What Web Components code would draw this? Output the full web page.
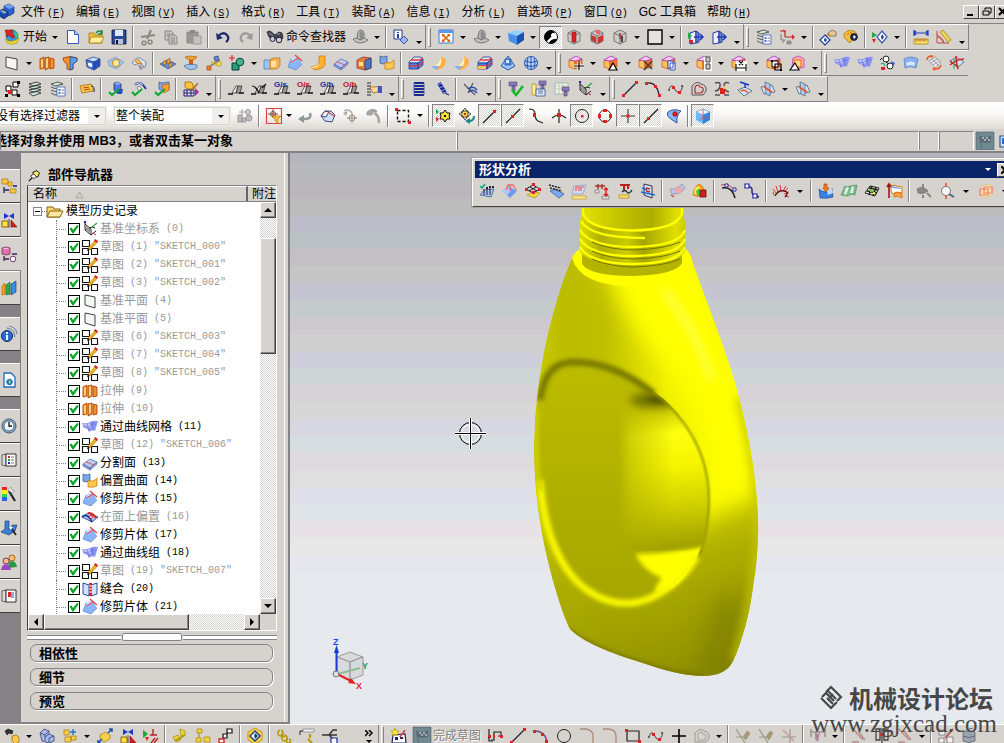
<!DOCTYPE html>
<html lang="zh-CN">
<head>
<meta charset="utf-8">
<title>部件导航器</title>
<style>
html,body{margin:0;height:100%;overflow:hidden;background:#d6d3ce;color:#000;font:12px/16px "Liberation Sans","Noto Sans CJK SC",sans-serif}
</style>
</head>
<body>
<cad-app></cad-app>
<script>
/* Icon parts: "fill,stroke,width|path" ; "o|cx,cy,r,fill,stroke" ; "t|x,y,size,colour,text" ; "@name" includes another icon */
const ICONS={
app:'o|8,7,6,#3a8fe0,#1a5;#e8d23a,#a80,.5|M1 10Q7 15 15 9L13 14Q8 17 3 14z;#d22,#811,.5|M1 1L9 1L8 4L11 8L8 9L5 6L3 8z;#5c5,-|M10 3L14 6L12 9z',
nx:'#2a5fd0,#124,.6|M5 2L10 0L15 3V9L10 12L5 9z;#6aa4f4,-|M5 2L10 0L15 3L10 5z;#1a48b0,#124,.6|M0 7L4 5L9 8V12L5 15L0 12z;#7ab,-|M1 7L4 6L8 8L5 10z',
new:'#fff,#3558b8,1|M2.500 1.500h7l4 4v9h-11z;#b9cdf5,#3558b8,1|M9.500 1.500v4h4',
open:'#f0c040,#a87810,.8|M1 4h5l1 2h7v8H1z;#fff0a0,#a87810,.8|M3 8h13l-3 6H1z;-,#284,1.500|M8 4Q11 0 14 4M14 1v4h-4',
save:'#2a4a9a,#113,.8|M1 1h14v14H1z;#dfe8fa,-|M4 1h8v6H4z;#b8c4d8,-|M4 10h8v5H4z;#113,-|M5 11h2v4H5z',
cut:'-,#8a8884,2|M11 1L7 10M1 8L15 6;-,#8a8884,1.600|M4 12a2 2 0 1 0 .1 0M10 11a2 2 0 1 0 .1 0',
copy:'#c6c3be,#888,1|M2 2h6l2 2v7H2z;#c6c3be,#888,1|M6 6h6l2 2v7H6z;-,#888,1|M8 9h4M8 11h4M8 13h4M4 5h3M4 7h2',
paste:'#9a9690,#888,1|M1 3h11v11H1z;#888,-|M4 1h5v3H4z;#c6c3be,#999,1|M7 7h8v8H7z',
undo:'-,#1a2a6a,2.200|M3 7Q8 2 12 6Q15 10 11 13;#1a2a6a,-|M1 4L2 11L8 9z',
redo:'-,#999,2.200|M13 7Q8 2 4 6Q1 10 5 13;#999,-|M15 4L14 11L8 9z',
bino:'#445,#223,.8|M0 3L3 2L8 6L12 3L15 4L16 9L12 12L8 9L6 11L2 8z;o|5.500,10,2.500,#ccd,#223;o|12,11,2.800,#ccd,#223;-,#99a,1|M2 4L6 7M10 5L13 5',
shoe:'#b4b4b4,#666,.8|M5 10Q5 1 9 1Q13 2 12 9L8 11z;#8c8c8c,-|M8 10Q7 3 9 2Q12 3 11 9z;#c2c2c2,#666,.8|M1 10L5 9L8 11L12 9L16 11Q13 14 8 14Q3 14 1 10z',
info:'#fff,#223a9a,1|M1 1h8v9H1z;#223a9a,-|M4 3h2v1H4zM4 5h2v4H4z;#9ab8f0,#223a9a,.8|M11 7L15 11L11 15L7 11z;-,#889,1|M9 6L12 9',
fit:'#fff,#3a78d0,1|M1 1h14v13H1z;#5a98f0,-|M1 1h14v3H1z;-,#e06010,1.600|M5 6L11 12M11 6L5 12;#e06010,-|M4 5h3L4 8zM12 5v3L9 5zM4 13v-3l3 3zM12 13H9l3-3z',
cubeb:'#8fd0ff,-|M0 4L8 1L16 3L9 7z;#4a90e8,-|M0 4L9 7V16L1 12z;#1a50b0,-|M16 3V11L9 16V7z',
shade:'o|8,8,6.500,#fff,#000;#000,-|M8 1.500a6.500 6.500 0 0 0 -4.500 11L8 8Q9 5 12 3.500A6.500 6.500 0 0 0 8 1.500z;#000,-|M14 10A6.500 6.500 0 0 1 6 14.200Q8 10 12 10z;o|10,6,1.500,#fff,#fff',
wire:'#ccc,#777,1|M8 1L14 4V12L8 15L2 12V4z;-,#777,1|M2 4L8 7L14 4M8 7V15',
cr1:'@wire;#d22,#911,.6|M6 3h4v10H6z',
cr2:'@wire;#c33,-|M2 6l5 2v6L2 11zM9 8l5-2v6l-5 3z;#e66,-|M7 1h4v4H7z',
cr3:'@wire;#b44,-|M7 4h2v6H7z;#444,-|M9 7h2v6H9z',
sq:'#e4e2de,#000,1.400|M1 1h14v14H1z',
door:'#eef,#223a9a,1|M2 4L8 2V14L2 15z;#6a86c8,#223a9a,1|M8 2L11 4V13L8 14z;-,#1a3ac0,1.500|M6 8h8M12 5l3 3l-3 3',
doorg:'@door;#2a4,-|M0 3l4 4l-4 3z;#d22,-|M1 11h4v3H1z',
lay:'#cde6dc,#222,.8|M2 3L10 1L14 3L6 5zM2 6L10 4.500L14 6L6 8zM2 9L10 7.500L14 9L6 11zM2 12L10 10.500L14 12L6 15z',
layl:'#d6ecdf,#333,.8|M1 3L8 1L13 3L5 5zM1 6L5 7.500L8 7M1 9L5 10.500L8 10M1 12L5 14L8 13;#fff,#3a58b8,.8|M7 6h8v9H7z;#3a78e0,-|M8.500 8h2v2h-2zM8.500 11h2v2h-2z;-,#555,.8|M11.500 9h2.500M11.500 12h2.500',
wcs:'-,#c22,1.200|M6 8L6 2M6 8h9M1 2h6M13 6l2 2l-2 2M4 1l2 2;-,#777,1|M2 5v6h4l-3 3;#999,#777,.6|M8 12h4v3H8z',
hand:'#e8c898,#765,.8|M8 4L12 1L16 3V7L10 7z;-,#c82,2|M7 5L10 7;#fff,#1a3a9a,1.200|M5 6L10 11L5 16L0 11z;#1a3a9a,-|M5 8.500L7 11L5 13.500L4 11z',
pal:'#f0c040,#a70,.8|M1 5Q4 0 11 2Q16 5 12 10Q8 9 8 13Q6 15 4 11Q0 9 1 5z;o|11,8,3.400,#224,#224;#f80,-|M4 4h2v2H4zM7 3h2v2H7z;#fff,-|M11 6l2 2l-2 2l-1-2z',
play:'#2a4,-|M0 3l5 3l-5 3z;#d22,-|M0 10h4l-2 4z;#fff,#3a58b8,1.200|M10 2L15 8L10 14L5 8z;#1a3a9a,-|M10 5L12 8L10 11L9 8z',
ruler:'-,#1a3ac0,1.200|M1 4h14M3 2L1 4l2 2M13 2l2 2l-2 2M1 1v6M15 1v6;#ffe070,#a80,.8|M1 10h14v5H1z;-,#a40,.8|M3 10v3M5 10v2M7 10v3M9 10v2M11 10v3M13 10v2',
ang:'#f0d060,#a80,.8|M4 3L7 1L15 11L12 13z;-,#c44,1|M1 2V14H13M1 8Q7 8 8 14M1 5L8 14',
plane:'#f6f6f6,#444,1|M2 2L13 4V15L2 12z',
extr:'#f8902a,#a03a00,.8|M1 4L5 2V13L1 14zM6 3L10 2V13L6 15zM11 3L15 4V13L11 14z;#ffd080,-|M2 5L4 4V12L2 13zM7 4L9 3V12L7 13z',
rev:'#f8902a,#a03a00,.8|M1 3Q8 0 15 3V6Q12 8 11 9V14L8 15L5 14V9Q1 7 1 3z;#5a9af0,#235,.6|M8 2V15L11 14V9Q13 8 15 6V3Q12 2 8 2z',
blk:'#c8dcff,#1a3a8a,.7|M1 5L8 2L15 4L9 7z;#4a78e0,#1a3a8a,.7|M1 5L9 7V15L2 12z;#2a50b8,#1a3a8a,.7|M15 4V11L9 15V7z;#fff,-|M3 8Q5 7 7 9V12Q4 12 3 10z',
hole:'#9cc4f4,#78a,.6|M0 6L7 2L16 7L9 14L1 11z;o|8,8,3.600,#ffe6a8,#c80',
bl2:'#d8e6f8,#678,.8|M1 8Q4 2 9 3L15 7Q15 12 13 13Q12 8 8 8L4 10z;#f8c060,#b60,.7|M4 6Q6 4 8 5L11 9Q9 8 7 9z;#99a,-|M7 10Q11 9 12 14L9 15z',
emb:'#5a90e0,#246,.6|M0 9L8 5L16 9L8 14z;#f8a030,#a40,.6|M3 7l3-2v4l-3 1zM7 5l3-2v5l-3 1zM9 9l3-2v4l-3 2z',
stamp:'#f8a030,#a50,.6|M2 2Q8 0 14 2Q12 5 8 5Q4 5 2 2z;#d06010,-|M6 5h4v5H6z;#9cc4f4,#356,.6|M1 11Q5 8 14 10Q15 13 12 14Q5 16 1 11z',
inst:'#5a90e0,#224,.6|M8 2l4-1l1 4l-4 1z;#f08020,#a30,.6|M1 11h4v4H1z;#ffe040,#a80,.6|M11 7h4v4h-4zM6 7h3v3H6z;-,#667,1|M4 11L14 5',
bool:'#2a9a7a,#043,1|M3 8h7v7H3z;o|11,7,3.800,#4ab090,#043;-,#d22,1.200|M0 3h6M3 0v6',
pad:'#9cc4f4,#468,.6|M0 5h6l3-2v9l-3 2H0z;#f8b050,#a60,.6|M6 5L9 3h7v8l-3 3H6z;#ffe0a0,-|M7 6h5v6H7z',
trim:'#8ab4f8,-|M4 4L10 1L15 9L9 15L1 12z;#c8dcff,-|M4 4L10 1L11 4L6 8z;-,#d44,1.200|M5 7L11 3M8 0L15 6;-,#5a80c8,.7|M4 4L1 12L9 15L15 9',
sheet:'#ffb030,#c60,.6|M9 1h6v9Q13 14 5 15L1 12Q8 11 9 7z;#ffe9a0,-|M9 8Q10 12 3 13L1 12Q8 11 9 8z',
split:'#b8ccf4,#56a,.7|M1 9L8 4L15 7L8 13z;#8aa4e0,#56a,.7|M1 9v2l7 4v-2zM8 13l7-6v2l-7 6z;-,#e55,1|M4 7l8 3',
shell:'#e88030,#823,.7|M1 5L7 2L15 3V13L9 15L1 13z;#4a78c8,#235,.7|M9 5L15 3V13L9 15z;#ffe0a0,-|M3 7h4v4H3z',
off:'#7aa8f0,#357,.7|M1 1Q4 3 8 1V8Q4 10 1 8z;#ffc850,#b70,.7|M6 7Q10 10 15 5V13Q11 15 6 14z',
edge:'#ddeaff,#1a3a8a,.8|M1 7L6 2H13L15 4L10 8H1z;#4a80e8,#1a3a8a,.8|M1 8H10V14H1zM10 8L15 4V10L10 14z;-,#e33,1.300|M3 5L11 5L15 3M2 11h8l5-4',
chm:'@edge;#f8c850,-|M1 11h8v3H1z',
flow:'#ffb040,-|M10 1Q10 8 2 12L6 15Q15 13 15 5z;#fff3c0,-|M10 1Q10 8 2 12L6 13Q12 10 10 1z;#8ab0f0,-|M0 11h9l-4 4z',
cage:'#a0c4ff,#2a58b0,1|M8 1L15 11L8 15L1 11z;#4a80e8,#2a58b0,.8|M5 4h6v6H5z;#d8e8ff,-|M6 5h3v3H6z',
ball:'o|8,8,6.500,#b8d8ff,#2a50a8;-,#2a50a8,1|M8 1.500V14.500M2 6Q8 9 14 6M2 10Q8 13 14 10M5 3Q3 8 5 13M11 3Q13 8 11 13',
syn:'#ffc060,#c50,.7|M1 5L7 6V14L1 12z;#ff7030,#c50,.7|M7 6L14 4V12L7 14z;#f4ccf8,#a3a,.8|M1 5L8 1L14 4L7 6z',
sy1:'@syn;-,#fff,3|M11 6V15M6 11H16;-,#000,1.200|M11 6V15M6 11H16',
sy2:'@syn;#fff,#000,1.200|M10 8L14 15H6z',
sy3:'@syn;-,#444,1.700|M6 6L14 14M14 6L6 15',
sy4:'@syn;#fff,#3a58b8,1|M7 6h5v7H7zM9 8h5v7H9z',
sy5:'@syn;#fff,-|M8 2h8v14H8z;#ccc,#444,1|M10 2h4v5h-4zM10 9h4v5h-4z',
sy6:'@syn;#fff,-|M5 6h11v10H5z;-,#000,1.100|M5 9v7M15 9v7M5 13h10M8 6l4 4M12 6l-4 4',
sy7:'@syn;#fff,#000,1|M6 6h6v6H6z;-,#000,1.200|M9 9h6v6H9z;#000,-|M5 5h2v2H5zM14 14h2v2h-2z',
sy8:'#ffb0a0,#c5c,1|M4 3L10 1L15 4V12L9 14L3 12z;#ffd890,#e60,1|M5 5h7v7H5z;#fff,#000,1.100|M6 8L10 15H1z',
surf:'#8c96f4,-|M0 4Q5 5 8 3T16 2L13 12Q10 10 7 13Q6 9 2 9z;#c6ccff,-|M1 5Q5 6 8 4L9 8Q6 9 3 8z;-,#5a62d0,.6|M1 7Q6 9 9 6T14 6M5 5L7 12M10 3L11 11',
msh:'o|6,4,3,#fff,#222;o|10,11,3,#fff,#222;-,#2a8,1.200|M1 9q3-2 4 2;#d22,-|M1 12h4v3H1z;#35c,-|M11 6l4 2l-2 3z;-,#222,1|M6 7L9 9M2 3l-2 2',
surf2:'#8ab0f4,#57b,.7|M1 4Q8 0 15 4L13 13Q8 10 2 13z;#d8e6ff,-|M3 8Q8 5 12 8L11 11Q7 9 4 11z',
xf:'#e8e4f4,#888,.7|M3 6L9 2L15 7L9 13z;-,#e52,1.500|M1 5Q1 1 6 1M15 10Q14 14 9 14;-,#888,.7|M5 8L11 4M7 10L13 6M6 4L12 10;#e52,-|M5 0l3 1l-3 2zM9 12v4l-3-2z',
xg:'#cfe0ff,#357,.7|M1 6L7 2L15 7L9 12z;-,#c22,1.500|M7 1Q7 6 9 14M1 10Q8 4 15 4M1 6L9 12;-,#2a5,1|M5 4L5 14',
grp:'#fff,#000,1|M9 1h5v5H9zM2 5h5v5H2zM8 9h5v5H8z;#d22,-|M4 9h4v4H4z;#000,-|M1 13h3v3H1zM13 13h3v3h-3zM13 0h3v3h-3z',
tag:'#ffc850,#a60,.8|M1 5L12 3L14 6V10L3 12z;-,#a40,1|M4 7L10 6M5 9L11 8;-,#235,1|M12 5Q16 5 15 11',
chk:'-,#1a3,2.200|M1 11L4 14L11 8',
cb:'#4a78e0,#124,.7|M6 2L10 1L13 3V10L9 12L6 9z;#8ab0ff,-|M6 2L10 1L13 3L9 4z;#2a50b8,-|M9 8h6l-1 5H9z;@chk',
cg:'-,#223a9a,2|M4 4Q8 0 12 4L15 8;-,#fff,.8|M4 4Q8 0 12 4;#fff,#447,.7|M8 5l3 3l-2 2l-3-3z;@chk',
co:'#7aa8f0,#357,.7|M5 1L8 2L15 1V9L10 11L5 8z;#f8a030,#c50,.7|M8 4L15 3V9L10 12z;@chk',
lib:'#f8c040,#a60,.8|M2 1h6l2 2v5H4L2 6z;#e0d8f8,#226,1|M1 9h10v6H1z;-,#226,1|M1 12h10M4 9v6M8 9v6;-,#a60,1.300|M15 2L10 8;#a2a,-|M12 7l4 4l-4 4z',
rat:'#eeeeea,#222,.7|M4 12L8 5L10 5L8 12z;#9a9a96,#222,.7|M8 12L10 5L14 5L12 12z;-,#111,1.300|M0 13h5M11 12h5',
rat2:'@rat;-,#111,1.200|M1 5Q5 5 8 12M11 7L15 3',
gs:'@rat;t|0,6,8,#22a,G/s',os:'@rat;t|0,6,8,#b11,O/s',gh:'@rat;t|0,6,8,#22a,G/h',oh:'@rat;t|0,6,8,#b11,O/h',
pt:'-,#222,1.200|M1 2h4M1 5h4M1 8h4M1 11h4M1 14h4;#ffe0a0,#a60,.8|M4 6h6l2-1v6L7 12z;#3a58c8,-|M12 5h4v7h-4z',
spr:'-,#1a2a8a,1.900|M3 2h10M3 5h10M3 8h10M3 11h10M3 14h10;-,#4a5ab8,1|M3 2v12M13 2v12',
spr2:'-,#1a2a8a,4|M5 2L11 12;-,#8a9cf0,1|M3 4l5-2M5 7l5-2M7 10l5-2M9 12l4-1;-,#1a2a8a,1.200|M11 12l4 2',
sprx:'-,#556,1.200|M1 3L12 14M10 2L5 12;-,#2a4aa8,1.500|M5 8Q10 4 14 9M6 11q4-4 8 1',
v1:'#8878c0,#546,.6|M1 1h8v4H1zM4 5h3v5H4z;-,#1b2,2.500|M4 9L8 14L15 5',
v2:'#8878c0,#546,.6|M8 0h7v4H8zM10 4h3v4h-3z;#ffe9a0,#a80,.7|M1 3h4v11H1z;#dfe8fa,#358,.8|M5 8h9v7H5z;-,#358,.8|M7 10h5M7 12h5',
v3:'#f0f4ee,#8a9,.7|M1 2h13v11H1z;-,#bb9,.7|M1 5h13M1 8h13M5 2v11M9 2v11;#8878c0,#546,.6|M8 6h7v4H8zM10 10h3v5h-3z',
csys:'-,#222,1|M3 2V9L9 14V8L3 3M3 9L10 6L13 7M9 14L14 10;#999,-|M4 5L8 8V12L4 9z;-,#2a4,1.300|M10 6l5-4;-,#c22,1|M11 12l3 2;#22a,-|M2 0h2v2H2z',
line:'-,#222,1.200|M2 14L14 2;#d22,-|M0 13h3v3H0zM13 0h3v3h-3z',
arc:'-,#222,1.200|M2 2Q12 1 14 14;#d22,-|M0 1h3v3H0zM9 4h3v3H9zM13 13h3v3h-3z',
sp:'-,#666,1.200|M1 9Q3 2 6 7T12 12L15 5;#d22,-|M4 5h3v3H4zM10 10h3v3h-3z;#666,-|M0 8h2v2H0zM13 4h2v2h-2z',
off2:'-,#a22,1.100|M4 12V6Q7 2 9 6Q13 6 12 10L10 12z;-,#555,1|M1 14V5Q6 -1 10 3Q16 4 15 10L12 14z',
br:'-,#555,1.500|M1 2Q7 0 6 5T1 10M15 2Q10 0 10 5T15 11M1 14h5M10 14h5;#d22,-|M6 7h5v6H6z;#fc4,-|M9 5h3v3H9z',
prj:'#cfe2ff,#467,.8|M1 9L8 6L15 10L7 15z;-,#13c,1.400|M3 1L12 4M8 3V7;-,#e52,1.400|M4 10Q8 8 11 12',
sec:'#cfe2ff,#467,.8|M1 6L12 4L15 11L4 13z;#b0c8f0,#467,.7|M5 1L10 3V15L6 13z;-,#e52,1.800|M4 6L12 11',
pins:'#bbb,#999,1|M1 7h4v7H1zM5 10h4v4H5z;-,#b99,1|M5 1v7M2 4h7;o|11,4,2.500,#ccc,#999;o|12,10,3,#bbb,#999',
sel:'-,#d44,1.200|M.500 .500h15v15H.500z;-,#a33,1|M2 6h10M7 1v9;o|7,6,2.500,-,#555;#ffc030,#a60,.6|M6 8h9l-3 3v4l-3-2v-2z',
ret:'-,#8a9a98,2.500|M13 5Q15 11 8 11H4;#8a9a98,-|M1 11l6-4v8z',
bx:'#cfe0ff,#224,.8|M1 8L5 3H11L15 7L12 14L5 13z;#eef,#224,.8|M5 3L1 8L6 9L9 4z;-,#d44,1.200|M8 4L14 8',
org:'-,#a8a5a0,1.300|M1 3Q6 0 9 5M9 5v10M4 10h10;o|9,10,3,-,#a87;#aaa,-|M0 5l3 3l2-5z',
ham:'#a8a5a0,#999,.7|M1 4Q4 0 10 2L11 4H7L6 7H1z;-,#a8a5a0,2.500|M8 5Q13 7 13 15',
rect:'-,#111,1.400,3 2|M2.500 2.500h11v11h-11z;#d22,-|M0 0h3v3H0zM13 13h3v3h-3z',
flw:'#ffe040,#111,1|M9 2L11 5L14 5L13 8L14 11L11 11L9 14L7 11L4 11L5 8L4 5L7 5z;#111,-|M8 7h2v2H8z;#1a3,-|M0 1l3 3l-3 2z;#d22,-|M0 9l3 2l-3 3z',
flw2:'@flwb;-,#288,2|M15 8Q15 13 10 13;#288,-|M6 13l5-3v6z',
flwb:'o|6,6,3.800,#ffe040,#111;#fff,#111,.7|M6 0l2 3H4zM6 12l2-3H4zM0 6l3-2v4zM12 6L9 4v4z;#d22,-|M5 5h2v2H5z',
ln2:'-,#222,1.200|M1 15L14 2;#d22,-|M11 2h3v3h-3z',
ln3:'-,#222,1.200|M1 15L15 1;#d22,-|M6 7h3v3H6z',
cv:'-,#222,1.200|M1 1Q7 1 7 6T10 13L15 15;#d22,-|M5 5h3v4H5z',
crs:'-,#222,1.200|M8 1V15M1 10Q8 4 15 10;#d22,-|M6 5h4v4H6z',
cc:'o|8,8,6.500,-,#222;#d22,-|M7 7h2.500v2.500H7z',
cq:'o|8,8,6,-,#222;#d22,-|M6 1h4v3H6zM6 12h4v3H6zM1 6h3v4H1zM12 6h3v4h-3z',
pl:'-,#444,1.200|M8 1V15M1 8H15;#d22,-|M6.500 6.500h3v3h-3z',
ln4:'-,#222,1.200|M1 15L15 1;#d22,-|M4 9h3v3H4z',
fac:'#8ab4f8,#235a9a,1|M2 4Q7 0 15 3Q10 7 11 15L5 11Q0 8 2 4z;o|9,6,2.200,#d22,#a11',
wcube:'#eaf4ff,#58a,.6|M1 4L8 1L15 4L8 7z;#6ab8ff,-|M1 4L8 7V16L1 12z;#2a88e0,-|M15 4V12L8 16V7z;-,#e44,.8|M8 1V10M5 11L14 9',
flag:'#6e8a90,#557,.6|M-1 -1h18v18H-1z;#586c70,-|M2 3l6 1l6-1v6l-6 1l-4-1l1 6H4z;#aab,-|M5 4h2v2H5zM9 4h2v2H9zM7 6h2v2H7zM11 6h2v2h-2z',
win:'#cfe0ff,#357,1.200|M2 3h14v11H2z;#2a6ad8,-|M4 5h12v6H4z',
/* tree and resource tabs */
folder:'#f8d870,#8a6010,1|M0 4h6l1 2h6v8H0z;#ffeaa0,#8a6010,1|M3 8h13l-3 6H0z',
sk:'#fff,#111,1.100|M.500 1.500h7v6h-7zM.500 9.500h6v6h-6zM9.500 9.500h6v6h-6z;-,#e8b020,3|M14 2L7 10;-,#a60,.6|M15.500 3L8 11;#d22,-|M13 0l3 2l-1 2l-3-2z;#222,-|M6 9l2 2l-3 1z',
pl2:'#f4f8f2,#444,1|M3 2L13 4V15L3 12z',
sew:'#cfe2ff,#1a3a9a,.9|M1 2L7 4V15L1 13zM9 4L15 2V13L9 15z;#d22,-|M7 2h3v13H7z;-,#fff,1|M7 5h3M7 8h3M7 11h3',
osf:'#a8c4f8,#1a3a9a,.8|M0 8L6 4L16 8L10 13z;-,#1a3a9a,1.800|M0 8Q5 3 10 13;-,#d22,2|M6 4Q11 4 14 9;o|9,8,1.500,#fff,#d22',
r1:'#f8c840,#a70,.7|M1 1h6v5H1zM7 4h4v4H7zM9 11h6v4H9z;-,#226,1.300|M3 9v6M3 12h5M12 8h4',
r2:'#1a3ac8,-|M3 1l5 3l-5 3zM13 1l-5 3l5 3z;#ffe040,#860,1|M1 9h6v6H1z;#c22,#800,.6|M10 8l6 7h-6z;-,#555,1|M8 7v9',
r3:'#e070b0,#803060,.8|M1 2Q5 0 9 2V8Q5 10 1 8z;#f8c8e0,-|M2 2.500Q5 1 8 2.500Q5 4 2 2.500z;-,#402050,1.300|M3 10v5M3 13h5M11 8h5;o|12,13,2.800,#fff,#803080',
r4:'#f8a030,#a50,.6|M1 6l3-3v11l-3 1z;#3a4,#162,.6|M5 5l4-3v12l-4 1z;#3a90e8,#135,.6|M10 4l5-3v11l-5 3z;#fff,-|M4 3l2-1v1zM9 3l3-2v1z',
r5:'o|6,10,5.500,#2a6ad8,#135;#fff,-|M5 6h2v2H5zM5 9h2v5H5z;-,#78a,1.200|M5 2Q13 2 14 11M8 0Q15 1 16 8',
r6:'#fff,#246ab8,1.300|M3 1h7l4 4v10H3z;o|8.500,10,2.800,#2a8a9a,#2a6ad8;#8e8,-|M8 8l2 2l-2 2z',
r7:'o|8,8,7,#8ab0d8,#456;o|8,8,5,#f4f8ff,#567;-,#111,1.300|M8 4v4h3',
r8:'#ddd,#444,.8|M1 3l4-1v12l-4-1z;#fff,#333,1|M5 2h10v12H5z;#d22,-|M7 4h2v2H7z;#1a3,-|M7 7h2v2H7z;#22c,-|M7 10h2v2H7z;-,#555,.8|M10 5h3M10 8h3M10 11h3',
r9:'#e22,-|M1 1h5v4H1z;#fe2,-|M1 4h5v4H1z;#2d4,-|M1 8h5v3H1z;#26f,-|M1 11h5v4H1z;-,#222,2.200|M8 5L14 15;#eee,#888,.6|M7 4l3-3l1 3l3 1l-3 2z',
r10:'#3a80d8,#135,.6|M4 1h4v8h3V5h5l-2 6L8 15L0 12l4-3z;-,#222,1.800|M10 8L15 15;#fff,-|M8 7l4 0l-2 3z',
r11:'o|11,4,3,#f0c080,#a60;#2a9a4a,-|M7 14Q7 7 11 7T16 13z;o|5,7,3,#f0c080,#836;#9a4ac0,-|M0 16Q1 10 5 10T10 16z',
r12:'#ddd,#444,.8|M1 3l4-1v12l-4-1z;#fff,#333,1|M5 2h10v12H5z;#d22,-|M7 4h3v5H7z;#8ae,-|M10 4h3v6h-3z',
pin:'#ffe860,#111,1.200|M6 4L11 2L14 5L12 10L7 9z;#fff,#111,1|M3 9L7 6L10 9L7 12z;-,#111,1.500|M1 15L5 11',
/* shape analysis */
a1:'#a8c4f8,#357,.7|M1 12L5 7L15 6L12 14z;-,#1a8,1.600|M1 3l2 2l3-4;-,#224,1|M5 12V6M8 12V5M11 12V4;#224,-|M7 4h2v2H7zM10 3h2v2h-2zM13 3h2v2h-2z',
a2:'#6a9cf0,-|M1 8L6 3L15 8L8 15z;#a8ccff,-|M1 8L6 3L9 8L5 12z;-,#e66,1.300|M4 7L6 2H11L14 7M8 8V3',
a3:'#f0d840,#a80,.6|M2 12L8 9L15 10L10 15z;-,#222,1|M1 6L8 2L15 6L8 10zM5 4l7 4M11 4L4 8;#d22,-|M7 0h3v3H7zM0 5h3v3H0zM13 5h3v3h-3zM7 8h3v3H7z',
a4:'#7aa8f8,#357,.7|M2 8L7 6L16 11L11 15z;-,#222,1.500,2 1|M1 2L13 5M2 5L14 8',
a5:'#d0dcf4,#88a,.6|M3 3L15 2L12 11H1z;-,#e55,1.200|M5 8V4h3v4M10 8V4h3;#ffe890,#b80,.6|M1 13h14v3H1z',
a6:'-,#a33,1.500|M1 3h10M4 1v5M8 1v5;#ddd,#666,.6|M1 7h4v3H1zM8 13h7v3H8z;-,#d22,1.500|M12 5v7M10 7l2-2l2 2M10 11l2 2l2-2',
a7:'-,#b22,2|M3 2h10M7 2v6M11 2v4;-,#222,1.300|M5 9Q8 6 10 9T15 7;#ffe070,#a80,.7|M2 12h10v3H2z',
a8:'#cfe0f8,#224,.9|M4 1L12 3V15L4 12z;-,#c22,1.500|M6 5L10 6M6 8L10 9;-,#26c,1.500|M1 9L15 12M2 5l5 2',
a9:'#b8c8f4,#88a,.7|M1 6Q7 7 13 1L16 5Q11 12 3 11z;#f0a8b0,-|M5 6Q9 5 12 3L14 7Q9 11 6 10z;-,#c44,1.500|M2 12L5 14',
a10:'#ff9a20,#b60,.6|M1 12Q2 4 7 1Q13 4 13 12Q8 15 1 12z;#fe3,-|M3 5Q7 1 9 6L5 12L2 11z;#3c4,-|M4 8L8 5V13L5 12z;#c22,#611,.8|M8 7h6v7H8z',
a11:'-,#222,1.600|M1 5Q11 3 14 15;-,#c44,1|M0 2Q8 0 15 8;#fff,#22a,1|M4 1h3v3H4zM12 5h3v3h-3z',
a12:'-,#228,1.500|M3 3Q9 4 8 8T15 14;#fff,#22a,1.200|M1 1h4v4H1zM9 11h4v4H9z',
a13:'-,#d33,1|M1 12l-1-3M3 10L0 6M5 9L3 3M8 8L7 2M10 8l3-5M11 9l4-4M11 11l5-2M12 13l4 1;-,#611,1.500|M2 13Q5 7 11 8T12 14',
a14:'#3a80e8,#147,.6|M1 6Q4 9 8 9T14 5L15 14Q8 16 2 15z;#b8d8ff,-|M9 8L14 5L15 10L10 12z;#f08020,#a30,.6|M6 1h3v4h2l-3 4l-3-4h1z',
a15:'#7ab890,#485,.6|M0 12L4 3Q6 5 9 3L16 2L14 12Q10 10 7 13z;#dff0dc,-|M5 4L8 5L5 12L3 11zM11 3L13 4L12 10L9 10z',
a16:'#e8e8c0,#222,1|M1 10L6 3L15 5L11 13z;-,#222,1.600|M3 8L13 10M5 5L14 7M8 3L5 12M12 4L9 13;#6c4,-|M6 6h3v3H6z;#ee2,-|M9 9h2v2H9z',
a17:'#fff,#d70,1|M4 2L15 4V10Q9 8 6 11L4 8z;#6ab0f0,-|M5 3L14 5V6L5 5z;#f8a840,#d60,.8|M7 11Q10 8 15 11V15Q10 12 7 14z;-,#a11,1.600|M2 15V2M0 4l2-3l2 3',
a18:'#8a8884,#777,.8|M1 6Q7 2 12 8Q8 12 2 10z;-,#8a8884,2|M11 10l4 4M7 1v4M7 12v3',
a19:'o|7,8,4.500,#f4f8fa,#777;-,#468,2|M10 11l5 3;-,#e52,1.600|M7 0v4M7 12v4',
a20:'#f8e0a0,#cb8,.6|M3 3L12 1L15 4V11L8 15L2 13z;-,#f08078,1.200|M2 6h8v6H2zM6 4h8v6H6z',
/* bottom bar */
b1:'#f8c850,#a60,.7|M8 8l4-1l3 2v5l-4 2l-3-3z;@bsm',bsm:'#333,#111,.6|M1 3L4 1L9 3L8 6L5 5L3 7z',
b2:'#a8b8e8,#347,.8|M1 5L5 1L10 3V6L15 8V13L10 15L3 13z;-,#347,.8|M1 5L6 7V13M6 7L10 3M6 9L10 6M15 8L10 10V15',
b3:'#f8d050,#a70,.7|M2 2h5v5H2zM3 9h6v5H3zM9 8h5v4H9z;-,#27c,1.400|M11 1v6M8 4h6',
b4:'#f8d050,#a70,.7|M3 7L9 4L13 7V11L7 14L3 11z;-,#25a,1.600|M11 5L15 1M15 4V1h-3M5 11L1 15M1 12v3h3',
b6:'#1a3,-|M0 2l5 4l-5 4z;-,#b22,1.400|M10 1v6M7 7h7M8 15l4-5M11 15l4-5;#d22,-|M2 9h4l-2 4z',
b7:'#f0d040,#a80,.7|M8 1l5 2v4l-4 1zM1 9l5-2l3 5l-5 2z;-,#a90,2|M3 13L13 7',
b8:'#f0d040,#a80,.7|M2 1h5v4H2zM1 10h5v4H1zM9 9h6v5H9z;-,#a80,1|M4 5v5',
b9:'#fff,#111,1.200|M9 1h5v4H9zM5 6h4v4H5z;#fff,#d22,1.400|M1 11h5v4H1z',
b10:'#f8d050,#b80,.8|M8 0L15 4V12L8 16L1 12V4z;#fff,#247,1.500|M8 3L13 8L8 13L3 8z;#247,-|M8 5l3 3l-3 3l-1-3z',
b11:'-,#b90,1.600|M4 2a2.500 3 0 1 0 1 0M8 7a2.500 3 0 1 0 1 0M5 6l4 3M12 11a2 2 0 1 0 1 0',
b12:'#eee,#888,.8|M4 1h11v3H4z;-,#222,1|M4 3H1v4;-,#b90,2.200|M11 6v4M9 11l4 4',
b13:'-,#333,1.400|M0 7h7M7 7L11 2h4M7 7h8M7 7l4 4;#fff,#22a,1.200|M9 10h6v6H9z',
b14:'#fff,#226,1.200|M2 7L14 6L15 15H1z;#226,-|M4 9h3v3H4zM9 9h3v2H9z;#fe3,#a90,.6|M4 0l1 3l3 0l-2 2l1 3l-3-2l-3 2l1-3l-2-2h3z;-,#d44,1.600|M14 2L9 9',
b15:'-,#222,1.200|M2 1V8M4 12H7V4H14V8H11;#d22,-|M1 7h3v3H1zM6 7h2v3H6zM13 7h3v3h-3z;-,#222,1.200|M2 9V13H6',
b16:'-,#848,1.600|M2 3Q12 3 14 14;#d22,-|M0 2h3v3H0zM8 5h3v3H8zM12 12h3v3h-3z',
circ:'o|8,8,6.500,-,#222',fil:'-,#b08878,1.300|M1 1H7Q14 2 14 8V16',
rct:'-,#222,1.200|M2 3h12v10H2z;#d22,-|M0 1h3v3H0zM13 12h3v3h-3z',
plus:'-,#000,1.600|M8 1V15M1 8H15',off3:'-,#b8a09a,1.100|M4 12V6Q7 2 9 6Q13 6 12 10L10 12z;-,#999,1|M1 14V5Q6 -1 10 3Q16 4 15 10L12 14z',
tr:'-,#998,1.200|M1 1L10 15M1 9h7;#a99870,#888,.5|M8 9L12 3L15 5L11 12z',
tr2:'-,#998,1.200|M1 9h14M9 1V15;-,#c99,1.400|M2 2L13 13',
dim:'-,#9a9890,1.600|M1 1v8M15 1v8M1 4h14;#a89,-|M5 4l3 2l2-2l-2 10l-3-3z',
per:'-,#b88a88,1.300|M2 1L12 12M7 3L14 12M1 14h7',mir:'-,#444,1.300|M2 1h4v11H2zM10 1h4v11h-4zM8 0v16;#b33,-|M6 5h4v3H6z',
sw:'#f4f0e8,#888,1|M1 2h6v5H1zM1 10h5v5H1zM9 9h6v6H9z;-,#a66,2|M15 1L7 10',cyl:'#9aa4b0,#667,.8|M2 4Q8 1 14 4V13Q8 16 2 13z;-,#667,1|M2 8Q8 11 14 8M5 2L12 0'
};
function parts(name){
  return (ICONS[name]||'').split(';').map(s=>{
    if(s[0]==='@')return parts(s.slice(1));
    const k=s.indexOf('|'),a=s.slice(0,k).split(','),d=s.slice(k+1),n=c=>!c||c==='-'?'none':c;
    if(a[0]==='o'){const[x,y,r,f,st]=d.split(',');return `<circle cx="${x}" cy="${y}" r="${r}" fill="${n(f)}" stroke="${n(st)}"/>`}
    if(a[0]==='t'){const[x,y,z,c,t]=d.split(',');return `<text x="${x}" y="${y}" font-size="${z}" font-family="Liberation Sans" font-weight="700" fill="${c}">${t}</text>`}
    return `<path d="${d}" fill="${n(a[0])}" stroke="${n(a[1])}" stroke-width="${a[2]||1}"${a[3]?` stroke-dasharray="${a[3]}"`:''}/>`;
  }).join('');
}
const svg=n=>`<svg viewBox="0 0 16 16" width="16" height="16" overflow="visible" aria-hidden="true">${parts(n)}</svg>`;
const define=(tag,render)=>customElements.define(tag,class extends HTMLElement{
  connectedCallback(){if(!this.shadowRoot)this.attachShadow({mode:'open'}).innerHTML=render(this)}
});
const BASE='*{box-sizing:border-box}button{font:inherit;color:inherit;border:0;margin:0;padding:0;background:none}svg{display:block;flex:none}';
const CHECK='repeating-conic-gradient(#fff 0 25%,#d6d3ce 0 50%) 0 0/2px 2px';

/* items: icon names; "name*" pressed; | separator; v drop arrow; n narrow arrow; e overflow arrow; "=text" caption; "~text" disabled caption */
define('tool-bar',el=>{
  const cell=t=>t==='|'?'<i class="sep"></i>'
    :t==='v'?'<button class="arr" aria-label="更多"></button>'
    :t==='n'?'<button class="arr narrow" aria-label="更多"></button>'
    :t==='e'?'<button class="arr end" aria-label="工具栏选项"></button>'
    :t==='>>'?'<button class="over" aria-label="工具栏选项"><svg width="8" height="13" fill="none" stroke="#000" stroke-width="1.500"><path d="M0 0l3 3l-3 3M4 0l3 3l-3 3"/><path d="M1 10h6l-3 3z" fill="#000" stroke="none"/></svg></button>'
    :t[0]==='='?`<span>${t.slice(1)}</span>`
    :t[0]==='~'?`<span class="off">${t.slice(1)}</span>`
    :`<button class="b${t.endsWith('*')?' on':''}" aria-label="${t.replace('*','')}">${svg(t.replace('*',''))}</button>`;
  return `<style>${BASE}
  :host{display:flex;align-items:center;flex:none;height:26px;border-top:1px solid #fff;border-bottom:1px solid #848284;border-right:1px solid #848284}
  :host([plain]){border:0}
  .grip{width:3px;height:20px;margin:0 3px 0 2px;border:1px solid;border-color:#fff #848284 #848284 #fff;flex:none}
  .b{width:23px;height:23px;display:flex;align-items:center;justify-content:center;flex:none}
  .on{border:1px solid;border-color:#848284 #fff #fff #848284;background:${CHECK}}
  .sep{width:2px;height:22px;margin:0 2px;border-left:1px solid #848284;border-right:1px solid #fff;flex:none}
  .arr{width:var(--arrow,12px);height:22px;flex:none;display:flex;align-items:center;justify-content:center}
  .arr::after{content:"";border:3px solid transparent;border-top-color:#000;border-bottom:0}
  .narrow{width:8px}
  .end{width:13px;align-items:flex-end;padding-bottom:4px}
  .over{width:37px;height:22px;display:flex;align-items:center;justify-content:flex-end;padding-right:5px}
  span{white-space:nowrap;padding-right:2px}.off{color:#848284;text-shadow:1px 1px #fff}
  </style>${el.hasAttribute('grip')?'<i class="grip"></i>':''}${el.getAttribute('items').split(' ').map(cell).join('')}<slot></slot>`});

define('tool-row',()=>`<style>:host{display:flex;overflow:hidden}</style><slot></slot>`);

define('menu-bar',()=>{
  const m=[['文件','F'],['编辑','E'],['视图','V'],['插入','S'],['格式','R'],['工具','T'],['装配','A'],['信息','I'],['分析','L'],['首选项','P'],['窗口','O'],['GC 工具箱',''],['帮助','H']];
  return `<style>${BASE}
  :host{display:flex;align-items:center;height:24px;border-bottom:1px solid #848284}
  .logo{padding-right:5px;margin-left:-1px}
  .m{padding:0 10px 0 1px;white-space:nowrap;height:20px}
  .m span{font:10px "Liberation Mono",monospace;padding-left:2px}
  .w{display:flex;margin-left:auto;margin-right:-7px}
  .w button{width:16px;height:14px;background:#d6d3ce;border:1px solid;border-color:#fff #404040 #404040 #fff;display:grid;place-items:center}
  </style><div class="logo">${svg('nx')}</div>${m.map(([a,b])=>`<button class="m">${a}${b?`<span>(<u>${b}</u>)</span>`:''}</button>`).join('')}
  <div class="w"><button aria-label="最小化"><svg width="10" height="9"><path d="M1 7h6v2H1z"/></svg></button><button aria-label="还原"><svg width="10" height="9"><path d="M3 1h6v5H7M3 1v2M1 4h6v4H1z" fill="none" stroke="#000"/></svg></button><button aria-label="关闭"><svg width="10" height="9"><path d="M1 1l7 7M8 1L1 8" stroke="#000" stroke-width="2"/></svg></button></div>`});

define('selection-bar',()=>`<style>${BASE}
  :host{display:flex;align-items:center;height:27px;background:linear-gradient(#fff,#fbfaf9 40%,#dfdbd5);overflow:hidden}
  label{position:relative;display:block;margin-right:8px}
  label:first-of-type{margin-left:-6px}label+label{margin-right:3px}
  select{appearance:none;display:block;height:18px;border:1px solid #d6d3ce;outline:1px solid #efece8;border-radius:0;background:linear-gradient(90deg,#fff calc(100% - 17px),#f0eeea 0);font:inherit;padding:0 20px 0 1px;width:116px}
  label:first-of-type select{width:112px}
  label::before{content:"";position:absolute;z-index:1;right:6px;top:8px;border:3px solid transparent;border-top-color:#000;border-bottom:0}
  </style><label><select aria-label="选择过滤器"><option>没有选择过滤器</select></label><label><select aria-label="选择范围"><option>整个装配</select></label>
  <tool-bar plain items="pins | sel n ret bx org ham | rect v | flw* flw2 ln2* ln3* cv crs cc* cq pl* ln4* fac | wcube*"></tool-bar>`);

define('prompt-bar',()=>`<style>${BASE}
  :host{display:flex;height:24px;padding-top:2px;border-bottom:2px solid #848284;overflow:hidden}
  div{height:19px;border-top:1px solid #848284;border-right:1px solid #fff;border-left:1px solid #848284;overflow:hidden;white-space:nowrap}
  .p{width:457px;font-weight:700;font-size:13px;line-height:17px;text-indent:-7px;flex:none}
  .s{flex:1}.c{width:20px}.d{width:35px}.i{display:flex;border:0;width:30px;gap:5px;padding:2px 0 0 3px}
  </style><div class="p">选择对象并使用 MB3，或者双击某一对象</div><div class="s"></div><div class="c"></div><div class="d"></div><div class="i">${svg('flag')}${svg('win')}</div>`);

define('resource-bar',()=>`<style>${BASE}
  :host{display:flex;flex-direction:column;width:21px;flex:none;background:#848284;padding-top:16px;overflow:hidden}
  button{height:34px;width:20px;background:#d6d3ce;border-top:1px solid #fff;border-bottom:1px solid #404040;display:flex;align-items:center;padding-left:1px;flex:none}
  .gap{margin-bottom:12px}.on{width:21px;border-bottom-color:#848284}
  </style>${[1,2,3,4,5,6,7,8,9,10,11,12].map(i=>`<button class="${i>3&&i<7?'gap':i===3?'on':''}" aria-label="资源 ${i}">${svg('r'+i)}</button>`).join('')}`);

define('tree-item',el=>`<style>${BASE}
  :host{display:flex;align-items:center;height:18px;margin-left:28px;border-left:1px dotted #848284;white-space:nowrap;color:#000}
  :host([dim]){color:#999}
  i{width:9px;border-top:1px dotted #848284;margin-right:2px}
  label{display:flex;align-items:center}
  input{appearance:none;width:12px;height:12px;margin:0 2px 0 0;border:1px solid #000;background:#fff;display:block}
  input:checked::after{content:"";display:block;width:10px;height:10px;background:#0a2;clip-path:polygon(5% 45%,25% 35%,40% 60%,80% 10%,98% 20%,45% 95%,35% 95%)}
  svg{margin-right:2px}
  ::slotted(span){font:10px/12px "Liberation Mono",monospace;white-space:pre}
  </style><i></i><label><input type="checkbox" checked>${svg(el.getAttribute('icon'))}<slot></slot></label>`);

define('nav-section',()=>`<style>${BASE}
  :host{display:block;margin:0 4px 6px 3px}
  button{display:block;width:100%;height:18px;border:1px solid #848284;border-radius:7px;box-shadow:1px 1px #fff;text-align:left;padding-left:8px;font-weight:700;font-size:13px;line-height:15px}
  </style><button><slot></slot></button>`);

const ROWS=[['csys','基准坐标系',0,'',1],['sk','草图',1,'000',1],['sk','草图',2,'001',1],['sk','草图',3,'002',1],['pl2','基准平面',4,'',1],['pl2','基准平面',5,'',1],['sk','草图',6,'003',1],['sk','草图',7,'004',1],['sk','草图',8,'005',1],['extr','拉伸',9,'',1],['extr','拉伸',10,'',1],['surf','通过曲线网格',11,'',0],['sk','草图',12,'006',1],['split','分割面',13,'',0],['off','偏置曲面',14,'',0],['trim','修剪片体',15,'',0],['osf','在面上偏置',16,'',1],['trim','修剪片体',17,'',0],['surf','通过曲线组',18,'',0],['sk','草图',19,'007',1],['sew','缝合',20,'',0],['trim','修剪片体',21,'',0]];
define('part-navigator',()=>`<style>${BASE}
  :host{display:flex;flex-direction:column;width:269px;flex:none;padding:12px 11px 0 6px;border-right:2px solid #848284;box-shadow:inset -3px 0 #d6d3ce,inset -4px 0 #fff;border-bottom:2px solid #848284}
  h2{margin:0;height:20px;display:flex;align-items:center;font-size:13px;padding-left:1px;flex:none}
  h2 svg{width:13px;height:13px;margin-right:7px}
  .box{flex:1;min-height:0;display:grid;grid-template:16px minmax(0,1fr) 16px/minmax(0,1fr) 16px;border:1px solid;border-color:#848284 #fff #fff #404040;background:#fff}
  .head{grid-column:1/3;display:flex;background:#d6d3ce;border-bottom:1px solid #848284;line-height:14px;overflow:hidden}
  .head div{padding-left:5px;border-top:1px solid #fff;white-space:nowrap}
  .head .n{flex:1;border-right:2px solid #666}
  .head .a{width:28px;padding-left:4px}
  .head svg{display:inline-block;margin-left:18px;vertical-align:-1px}
  .list{overflow:hidden}
  .root{display:flex;align-items:center;height:18px;padding-left:5px}
  .root b{width:9px;height:9px;border:1px solid #848284;display:grid;place-items:center}
  .root b::after{content:"";width:5px;height:1px;background:#000}
  .root i{width:5px;border-top:1px dotted #848284}
  .root svg{margin-right:3px}
  .v,.h{background:${CHECK};display:flex}
  .v{flex-direction:column}
  .v button,.h button{background:#d6d3ce;border:1px solid;border-color:#fff #404040 #404040 #fff;box-shadow:inset -1px -1px #848284;width:16px;height:16px;display:grid;place-items:center;flex:none}
  .v .t{height:116px;margin-top:20px}.h .t{width:145px}.v .last{margin:auto 0 0}.h .last{margin:0 0 0 auto}
  .corner{background:#d6d3ce}
  .split{height:12px;display:flex;align-items:center;flex:none}
  .split::before,.split::after{content:"";flex:1;height:3px;border-top:1px solid #848284;border-bottom:1px solid #848284;background:#fff}
  .split span{width:60px;height:8px;background:#fff;border:1px solid #848284;border-radius:2px;margin:0 1px}
  .secs{padding:1px 0 6px;flex:none}
  </style><h2>${svg('pin')}部件导航器</h2>
  <div class="box"><div class="head"><div class="n">名称<svg width="9" height="8"><path d="M4.500 1L8 7H1z" fill="none" stroke="#a8a5a0"/></svg></div><div class="a">附注</div></div>
  <div class="list"><div class="root"><b></b><i></i>${svg('folder')}模型历史记录</div>
  ${ROWS.map(([ic,n,i,s,d])=>`<tree-item icon="${ic}"${d?' dim':''}>${n}<span> (${i})${s?` "SKETCH_${s}"`:''}</span></tree-item>`).join('')}</div>
  <div class="v"><button aria-label="上"><svg width="8" height="4"><path d="M4 0l4 4H0z"/></svg></button><button class="t" aria-label="滚动块"></button><button class="last" aria-label="下"><svg width="8" height="4"><path d="M0 0h8L4 4z"/></svg></button></div>
  <div class="h"><button aria-label="左"><svg width="4" height="8"><path d="M4 0v8L0 4z"/></svg></button><button class="t" aria-label="滚动块"></button><button class="last" aria-label="右"><svg width="4" height="8"><path d="M0 0v8l4-4z"/></svg></button></div><div class="corner"></div></div>
  <div class="split"><span></span></div>
  <div class="secs"><nav-section>相依性</nav-section><nav-section>细节</nav-section><nav-section>预览</nav-section></div>`);

define('float-bar',()=>`<style>${BASE}
  :host{display:block;background:#d6d3ce;border:1px solid;border-color:#fff #404040 #404040 #fff;outline:1px solid #a9a7a4;padding:2px 2px 2px;--arrow:16px}
  header{display:flex;align-items:center;height:17px;background:#0a246a;color:#fff;font-weight:700;font-size:13px;padding:0 0 0 4px}
  .d{margin-left:auto;border:3px solid transparent;border-top-color:#fff;border-bottom:0;margin-right:6px}
  button{width:15px;height:14px;background:#d6d3ce;border:1px solid;border-color:#fff #404040 #404040 #fff;display:grid;place-items:center}
  </style><header>形状分析<i class="d"></i><button aria-label="关闭"><svg width="8" height="8"><path d="M0 0l8 8M8 0L0 8" stroke="#000" stroke-width="2"/></svg></button></header>
  <tool-bar plain items="a1 a2 a3 a4 a5 a6 a7 a8 | a9 a10 | a11 a12 | a13 v | a14 a15 a16 a17 | a18 a19 v a20 v"></tool-bar>`);

const BODY='M572 258C560 285 549 325 543 357C536 395 534 425 534 453C534 500 543 552 560 604Q566 622 570 629C580 640 604 650 627 658C655 667 680 676 703 676Q726 676 733 661C742 642 750 612 753 587Q759 550 758 520C757 480 750 440 739 397C728 353 709 310 692 260Q688 250 680 246L588 246Q576 250 572 258z';
const HOLE='M538 400C542 372 553 359 573 359C604 359 632 373 653 391C686 415 709 452 709 500C709 548 688 582 660 597C640 608 617 609 593 595C565 577 548 545 541 500Q536 440 538 400z';
const BANDS=['#b5b5be','#b7b9bc','#bab7ba','#bcbcbc','#bbbcc7','#b9c1c4','#c4bfc3','#c6c6c6','#c4c5d0','#c5cbcd','#cdc9cd','#cfcfcf','#cdced9','#ced5d7','#d6d2d6','#d7d7d7','#d6d7e1','#d6dde0','#dedadd','#dfdfdf','#dfdfe9','#dee4e7','#e8e2e7','#e7e7e7','#e6e6ef','#e6e9ee'];
const STEP=17;
define('model-view',()=>`<style>${BASE}
  :host{display:block;position:relative;flex:1;min-width:0;overflow:hidden;background:linear-gradient(${BANDS.map((c,i)=>{const a=Math.max(0,i*STEP-6),b=(i+1)*STEP-6;return i===BANDS.length-1?`${c} ${a}px`:`${c} ${a}px ${b}px`}).join(',')})}
  .scene{width:100%;height:100%}
  float-bar{position:absolute;left:182px;right:-11px;top:5px}
  </style>
  <svg class="scene" viewBox="290 153 714 571" preserveAspectRatio="xMinYMin meet" role="img" aria-label="瓶体模型">
  <defs>
   <linearGradient id="base" x1="540" y1="0" x2="755" y2="0" gradientUnits="userSpaceOnUse"><stop offset="0" stop-color="#c8c800"/><stop offset=".1" stop-color="#bdbd00"/><stop offset=".3" stop-color="#bfbf00"/><stop offset=".6" stop-color="#f0f000"/><stop offset="1" stop-color="#ffff00"/></linearGradient>
   <linearGradient id="low" x1="610" y1="480" x2="690" y2="676" gradientUnits="userSpaceOnUse"><stop offset="0" stop-color="#a8a800" stop-opacity="0"/><stop offset=".5" stop-color="#a6a600" stop-opacity=".9"/><stop offset="1" stop-color="#8e8e00"/></linearGradient>
   <linearGradient id="neck" x1="580" y1="0" x2="686" y2="0" gradientUnits="userSpaceOnUse"><stop offset="0" stop-color="#dede00"/><stop offset=".2" stop-color="#b0b000"/><stop offset=".45" stop-color="#cccc00"/><stop offset=".6" stop-color="#a4a400"/><stop offset=".9" stop-color="#e0e000"/><stop offset="1" stop-color="#cccc00"/></linearGradient>
   <linearGradient id="mouth" x1="583" y1="0" x2="681" y2="0" gradientUnits="userSpaceOnUse"><stop offset="0" stop-color="#e2e200"/><stop offset=".35" stop-color="#c4c400"/><stop offset=".7" stop-color="#adad00"/><stop offset=".95" stop-color="#dede00"/></linearGradient>
   <linearGradient id="pit" x1="0" y1="360" x2="0" y2="600" gradientUnits="userSpaceOnUse"><stop offset="0" stop-color="#bcbc00"/><stop offset="1" stop-color="#a6a600"/></linearGradient>
   <linearGradient id="grip" x1="640" y1="408" x2="655" y2="548" gradientUnits="userSpaceOnUse"><stop offset="0" stop-color="#c4c400"/><stop offset=".2" stop-color="#ffff10"/><stop offset=".45" stop-color="#f4f400"/><stop offset=".75" stop-color="#cccc00"/><stop offset="1" stop-color="#a2a200"/></linearGradient>
   <linearGradient id="gfade" x1="618" y1="0" x2="674" y2="0" gradientUnits="userSpaceOnUse"><stop offset="0" stop-color="#000"/><stop offset=".25" stop-color="#666"/><stop offset="1" stop-color="#fff"/></linearGradient>
   <mask id="gm" maskUnits="userSpaceOnUse" x="600" y="360" width="120" height="260"><path d="M600 360h120v260H600z" fill="url(#gfade)"/></mask>
   <filter id="s1" x="-30%" y="-30%" width="160%" height="160%"><feGaussianBlur stdDeviation="1"/></filter>
   <filter id="s2" x="-30%" y="-30%" width="160%" height="160%"><feGaussianBlur stdDeviation="2"/></filter>
   <filter id="s4" x="-60%" y="-60%" width="220%" height="220%"><feGaussianBlur stdDeviation="4"/></filter>
   <filter id="s12" x="-60%" y="-60%" width="220%" height="220%"><feGaussianBlur stdDeviation="11"/></filter>
   <clipPath id="cb"><path d="${BODY}"/></clipPath><clipPath id="ch"><path d="${HOLE}"/></clipPath>
  </defs>
  <g clip-path="url(#cb)">
   <path d="${BODY}" fill="url(#base)"/>
   <path d="M600 255L690 250C725 350 752 430 748 500L716 530C716 450 700 400 662 362Q625 325 600 255z" fill="#ffff00" filter="url(#s12)"/>
   <path d="M640 290Q690 350 716 430L735 440L690 270z" fill="#ffff00" filter="url(#s4)"/>
   <path d="M664 290Q696 330 712 380" fill="none" stroke="#ffff48" stroke-width="7" filter="url(#s4)"/>
   <path d="M500 490L620 570L715 515L775 490V720H500z" fill="url(#low)" filter="url(#s12)"/>
   <path d="M712 600L696 690L750 690L744 590z" fill="#777700" opacity=".5" filter="url(#s12)"/>
   <path d="M739 397Q754 450 758 520Q757 600 735 660" fill="none" stroke="#c6c600" stroke-width="9" opacity=".8" filter="url(#s4)"/>
   <path d="M568 629C580 640 604 650 627 658S680 676 703 676" fill="none" stroke="#6e6e00" stroke-width="3" filter="url(#s2)"/>
   <path d="${HOLE}" fill="url(#pit)"/>
   <g clip-path="url(#ch)">
    <g mask="url(#gm)"><path d="M600 405H715V548Q680 552 600 548z" fill="url(#grip)"/></g>
    <ellipse cx="654" cy="400" rx="24" ry="8" fill="#757500" filter="url(#s4)"/>
    <ellipse cx="660" cy="399" rx="14" ry="4" fill="#5c5c00" filter="url(#s2)"/>
    <path d="M636 554Q670 554 706 545L690 582L656 594Q652 590 662 578Q642 570 636 554z" fill="#ffff00" filter="url(#s2)"/>
    <path d="M634 549Q670 550 704 543" fill="none" stroke="#a4a400" stroke-width="4" filter="url(#s2)"/>
   </g>
   <path d="M540 400C544 374 553 363 573 362C604 362 632 376 654 394" fill="none" stroke="#7c7c00" stroke-width="7" filter="url(#s2)"/>
   <path d="M654 393C686 417 709 454 709 500Q709 535 698 560" fill="none" stroke="#9a9a00" stroke-width="2" filter="url(#s1)"/>
   <path d="M540 480C544 535 562 574 590 592C616 609 642 605 662 592Q685 578 697 556" fill="none" stroke="#fafa00" stroke-width="7" filter="url(#s2)"/>
   <path d="M538 410Q534 450 541 490" fill="none" stroke="#cccc00" stroke-width="4" filter="url(#s2)"/>
  </g>
  <path d="M572 258Q580 286 632 286Q684 285 692 260Q690 250 682 248H582Q574 252 572 258z" fill="#ffff00"/>
  <path d="M582 250V264Q590 276 632 276Q676 275 682 263V250z" fill="#b4b400"/>
  <path d="M583 206H682L685 222V252Q676 265 632 265Q588 264 580 252V222z" fill="url(#neck)"/>
  <path d="M583 200H682V213Q676 231 632 231Q590 230 583 213z" fill="url(#mouth)"/>
  <g fill="none" stroke="#ffff00" stroke-width="2.400"><path d="M583 208V214Q590 230 632 230.500Q676 230 682 214V208"/><path d="M581 221Q590 238 645 238M580 230Q590 247 634 247Q680 246 685 230M580 239Q590 256 634 256Q680 255 685 239M580 247Q590 264 634 264Q680 263 685 247"/></g>
  <g fill="none" stroke="#777700" stroke-width="1"><path d="M592 242Q610 250 634 250Q665 249 680 242M592 251Q610 259 634 259Q665 258 680 251M592 259Q610 267 634 267Q665 266 680 259"/></g>
  <g fill="none" stroke="#000"><circle cx="470.500" cy="433.500" r="11"/><circle cx="470.500" cy="433.500" r="9" stroke="#fff"/><path d="M455 433.500h31M470.500 418v31" stroke="#fff" stroke-width="3"/><path d="M455 433.500h31M470.500 418v31"/></g>
  <g stroke="#999" fill="#ccc" fill-opacity=".5"><path d="M337 657L350 652L363 657L350 662z"/><path d="M337 657L350 662V680L337 674z"/><path d="M350 662L363 657V675L350 680z"/></g>
  <path d="M338 674L360 668" stroke="#8cbf98" stroke-width="2"/><path d="M336.500 674V650" stroke="#1a3ad0" stroke-width="2"/><path d="M334 653h5l-2.500-8z" fill="#1a3ad0"/><path d="M337 674L351 681" stroke="#d22" stroke-width="2"/><path d="M351 678l5 6l-8-1z" fill="#d22"/><circle cx="336" cy="674" r="3" fill="#ddd" stroke="#777"/>
  <g font-family="Liberation Sans" font-weight="700" font-size="9"><text x="333" y="645" fill="#1a4af0">Z</text><text x="362" y="669" fill="#2a9a3a">Y</text><text x="356" y="689" fill="#d22">X</text></g>
  </svg><float-bar></float-bar>`);

define('water-mark',()=>`<style>
  :host{display:block;color:#474747;pointer-events:none;text-align:right;white-space:nowrap}
  .t{display:flex;align-items:center;justify-content:flex-end;gap:5px;font:700 24px/24px "Noto Sans CJK SC",sans-serif;padding-right:4px}
  .u{font:25px/28px "Liberation Serif",serif}
  </style><div class="t"><svg width="25" height="25" viewBox="0 0 25 25" fill="none" stroke="#474747" stroke-width="2.200" aria-hidden="true"><path d="M7 7L12 2L22 12L18 16M9 6L17 14M3 12L7 8L15 16M2 13L12 23L18 17M8 13L14 19M14 9L10 13"/></svg><span>机械设计论坛</span></div><div class="u">www.zgjxcad.com</div>`);

define('cad-app',()=>`<style>${BASE}
  :host{display:flex;flex-direction:column;height:100vh;position:relative;overflow:hidden}
  menu-bar,tool-row,selection-bar,prompt-bar{flex:none}
  main{flex:1;min-height:0;display:flex}
  .foot{height:19px;border-top:1px solid #fff;align-items:flex-start}
  .foot tool-bar{height:22px;border-top:0;border-bottom:0}
  water-mark{position:absolute;right:7px;bottom:5px}
  </style>
  <menu-bar></menu-bar>
  <tool-row><tool-bar items="app =开始 v new open save | cut copy paste | undo redo | bino =命令查找器 shoe v | info e"></tool-bar><tool-bar grip items="fit v shoe v cubeb v shade* cr1 cr2 cr3 v sq v | doorg door e"></tool-bar><tool-bar grip items="layl wcs v | hand pal | play v | ruler ang e"></tool-bar></tool-row>
  <tool-row><tool-bar items="plane v extr rev blk hole bl2 | emb stamp inst bool v pad trim sheet split shell off | edge flow flow chm cage ball e"></tool-bar><tool-bar grip items="sy1 v sy2 v sy3 sy4 v sy5 v sy6 v sy7 sy8 e"></tool-bar><tool-bar grip items="surf surf msh surf2 xf xg" style="border-right:0"></tool-bar></tool-row>
  <tool-row><tool-bar items="grp lay layl | tag | cb cg co | lib e"></tool-bar><tool-bar grip items="rat rat2 gs os gh oh pt e"></tool-bar><tool-bar grip items="spr spr2 | sprx e"></tool-bar><tool-bar grip items="v1 v2 v3 csys e"></tool-bar><tool-bar grip items="line arc sp off2 br prj sec v sec e"></tool-bar></tool-row>
  <selection-bar></selection-bar>
  <prompt-bar></prompt-bar>
  <main><resource-bar></resource-bar><part-navigator></part-navigator><model-view></model-view></main>
  <tool-row class="foot"><tool-bar items="b1 v b2 b3 v b4 r2 b6 | b7 b8 b9 | b10 | b11 b12 b13 >>"></tool-bar><tool-bar grip items="b14 flag ~完成草图 b15 line b16 circ fil fil rct sp plus off3 v | tr tr tr2 | dim v | per mir per v | sw cyl" style="border-right:0"></tool-bar></tool-row>
  <water-mark></water-mark>`);
</script>
</body>
</html>
